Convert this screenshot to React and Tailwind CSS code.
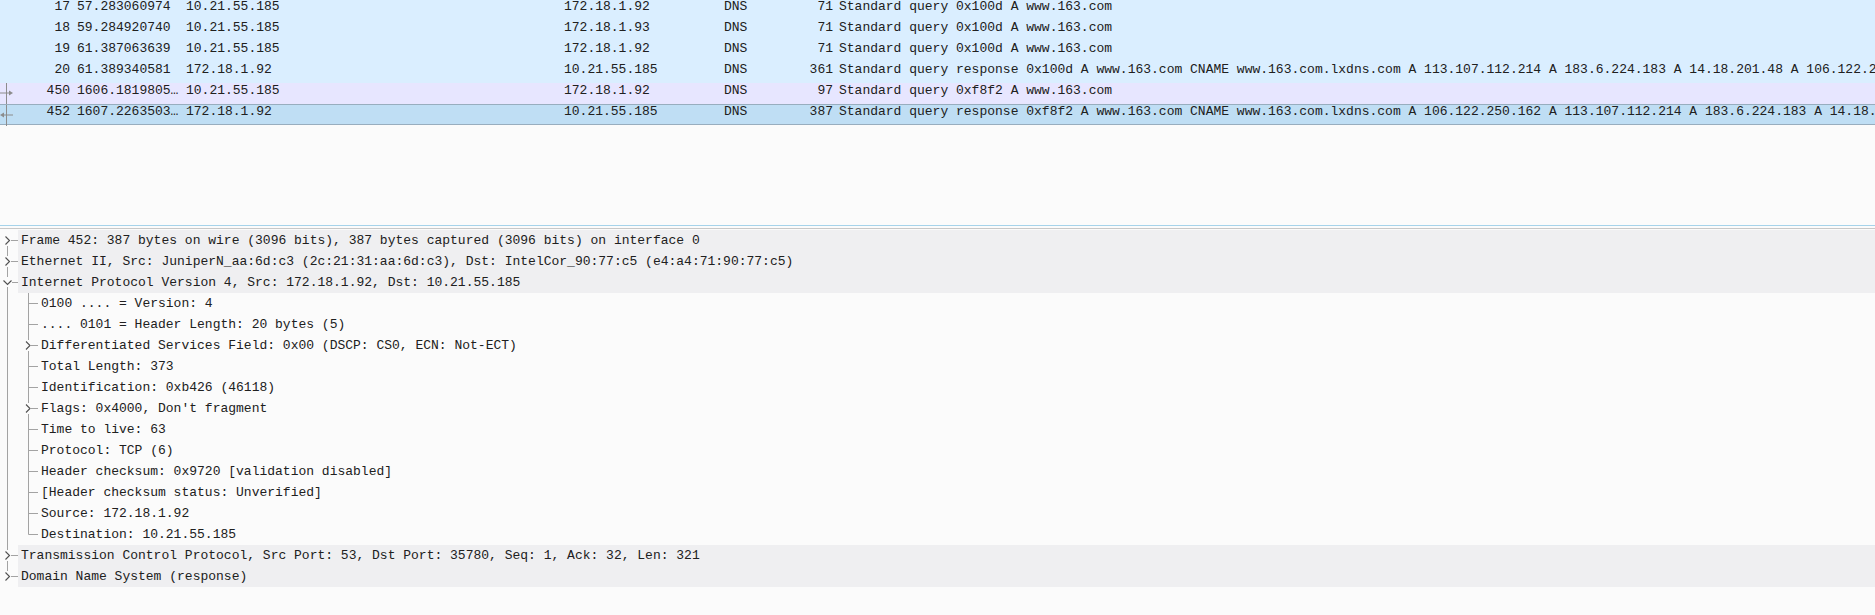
import React from "react";

const packets = [
  { no: 17, time: "57.283060974", src: "10.21.55.185", dst: "172.18.1.92", proto: "DNS", len: 71, info: "Standard query 0x100d A www.163.com", kind: "dns" },
  { no: 18, time: "59.284920740", src: "10.21.55.185", dst: "172.18.1.93", proto: "DNS", len: 71, info: "Standard query 0x100d A www.163.com", kind: "dns" },
  { no: 19, time: "61.387063639", src: "10.21.55.185", dst: "172.18.1.92", proto: "DNS", len: 71, info: "Standard query 0x100d A www.163.com", kind: "dns" },
  { no: 20, time: "61.389340581", src: "172.18.1.92", dst: "10.21.55.185", proto: "DNS", len: 361, info: "Standard query response 0x100d A www.163.com CNAME www.163.com.lxdns.com A 113.107.112.214 A 183.6.224.183 A 14.18.201.48 A 106.122.250.162", kind: "dns" },
  { no: 450, time: "1606.1819805…", src: "10.21.55.185", dst: "172.18.1.92", proto: "DNS", len: 97, info: "Standard query 0xf8f2 A www.163.com", kind: "tcp", mark: "req" },
  { no: 452, time: "1607.2263503…", src: "172.18.1.92", dst: "10.21.55.185", proto: "DNS", len: 387, info: "Standard query response 0xf8f2 A www.163.com CNAME www.163.com.lxdns.com A 106.122.250.162 A 113.107.112.214 A 183.6.224.183 A 14.18.201.48", kind: "sel", mark: "resp" },
];

function Mark({ type }) {
  if (!type) return null;
  return (
    <svg width="16" height="21" viewBox="0 0 16 21" className="block shrink-0">
      <line x1="6.5" y1="0" x2="6.5" y2="21" stroke="#8c8c8c" strokeWidth="1" />
      {type === "req" ? (
        <>
          <line x1="0" y1="10" x2="9" y2="10" stroke="#8c8c8c" strokeWidth="1" />
          <polygon points="9,7.5 13,10 9,12.5" fill="#8c8c8c" />
        </>
      ) : (
        <>
          <line x1="3" y1="10" x2="13" y2="10" stroke="#8c8c8c" strokeWidth="1" />
          <polygon points="4,7.5 0,10 4,12.5" fill="#8c8c8c" />
        </>
      )}
    </svg>
  );
}

function PacketRow({ p }) {
  const bg =
    p.kind === "dns"
      ? "bg-[#daeeff]"
      : p.kind === "tcp"
      ? "bg-[#e7e6ff]"
      : "bg-[#bfdef4] border-y border-[#98adbe]";
  return (
    <div className={`relative flex h-[21px] items-center whitespace-nowrap ${bg}`}>
      {p.mark && (
        <div className="absolute left-0 top-0 h-full">
          <Mark type={p.mark} />
        </div>
      )}
      <div className="flex h-full w-[74px] shrink-0 items-center justify-end pb-[6px] pr-[4px] leading-[15px]">
        <span>{p.no}</span>
      </div>
      <div className="flex h-full flex-1 items-center pb-[6px] leading-[15px]">
        <div className="w-[109px] shrink-0 pl-[3px]">{p.time}</div>
        <div className="w-[378px] shrink-0 pl-[3px]">{p.src}</div>
        <div className="w-[160px] shrink-0 pl-[3px]">{p.dst}</div>
        <div className="w-[55px] shrink-0 pl-[3px]">{p.proto}</div>
        <div className="w-[60px] shrink-0 pr-[3px] text-right">{p.len}</div>
        <div className="min-w-0 flex-1 overflow-hidden pl-[3px]">{p.info}</div>
      </div>
    </div>
  );
}

const LINE = "#a3a3a3";
const CHEV = "#505050";

function TopGutter({ state, first, last }) {
  return (
    <svg width="18" height="21" viewBox="0 0 18 21" className="shrink-0">
      {!first && <line x1="7.5" y1="0" x2="7.5" y2="5" stroke={LINE} />}
      {state === "open" ? (
        <>
          <polyline points="3.5,8.5 7.5,12.5 11.5,8.5" fill="none" stroke={CHEV} strokeWidth="1.1" />
          <line x1="7.5" y1="15" x2="7.5" y2="21" stroke={LINE} />
          <line x1="12" y1="10.5" x2="18" y2="10.5" stroke={LINE} />
        </>
      ) : (
        <>
          <polyline points="5.5,6.5 9.5,10.5 5.5,14.5" fill="none" stroke={CHEV} strokeWidth="1.1" />
          <line x1="11" y1="10.5" x2="18" y2="10.5" stroke={LINE} />
          {!last && <line x1="7.5" y1="16" x2="7.5" y2="21" stroke={LINE} />}
        </>
      )}
    </svg>
  );
}

function ChildGutter({ expandable, last }) {
  return (
    <svg width="38" height="21" viewBox="0 0 38 21" className="shrink-0">
      <line x1="7.5" y1="0" x2="7.5" y2="21" stroke={LINE} />
      {expandable ? (
        <>
          <line x1="28.5" y1="0" x2="28.5" y2="5" stroke={LINE} />
          <polyline points="26,6.5 30,10.5 26,14.5" fill="none" stroke={CHEV} strokeWidth="1.1" />
          <line x1="28.5" y1="16" x2="28.5" y2="21" stroke={LINE} />
          <line x1="31" y1="10.5" x2="38" y2="10.5" stroke={LINE} />
        </>
      ) : (
        <>
          <line x1="28.5" y1="0" x2="28.5" y2={last ? 10.5 : 21} stroke={LINE} />
          <line x1="28.5" y1="10.5" x2="38" y2="10.5" stroke={LINE} />
        </>
      )}
    </svg>
  );
}

const children = [
  { t: "0100 .... = Version: 4" },
  { t: ".... 0101 = Header Length: 20 bytes (5)" },
  { t: "Differentiated Services Field: 0x00 (DSCP: CS0, ECN: Not-ECT)", exp: true },
  { t: "Total Length: 373" },
  { t: "Identification: 0xb426 (46118)" },
  { t: "Flags: 0x4000, Don't fragment", exp: true },
  { t: "Time to live: 63" },
  { t: "Protocol: TCP (6)" },
  { t: "Header checksum: 0x9720 [validation disabled]" },
  { t: "[Header checksum status: Unverified]" },
  { t: "Source: 172.18.1.92" },
  { t: "Destination: 10.21.55.185", last: true },
];

function TopRow({ text, state, first, last }) {
  return (
    <div className="flex h-[21px] items-center whitespace-nowrap">
      <TopGutter state={state} first={first} last={last} />
      <div className="flex h-full flex-1 items-center bg-[#efeff1] pl-[3px]">{text}</div>
    </div>
  );
}

export default function App() {
  return (
    <div
      className="flex h-[615px] w-[1875px] flex-col overflow-hidden bg-[#fbfbfb] text-[13px] leading-[21px] text-[#202020]"
      style={{ fontFamily: '"Liberation Mono", "DejaVu Sans Mono", monospace' }}
    >
      <div className="-mt-px flex h-[227px] shrink-0 flex-col border-b border-[#a6d3ea]">
        {packets.map((p) => (
          <PacketRow key={p.no} p={p} />
        ))}
      </div>
      <div className="mt-[2px] flex flex-1 flex-col border-t border-[#c8c8c8] pt-px">
        <TopRow text="Frame 452: 387 bytes on wire (3096 bits), 387 bytes captured (3096 bits) on interface 0" first />
        <TopRow text="Ethernet II, Src: JuniperN_aa:6d:c3 (2c:21:31:aa:6d:c3), Dst: IntelCor_90:77:c5 (e4:a4:71:90:77:c5)" />
        <TopRow text="Internet Protocol Version 4, Src: 172.18.1.92, Dst: 10.21.55.185" state="open" />
        {children.map((c) => (
          <div key={c.t} className="flex h-[21px] items-center whitespace-nowrap">
            <ChildGutter expandable={c.exp} last={c.last} />
            <div className="pl-[3px]">{c.t}</div>
          </div>
        ))}
        <TopRow text="Transmission Control Protocol, Src Port: 53, Dst Port: 35780, Seq: 1, Ack: 32, Len: 321" />
        <TopRow text="Domain Name System (response)" last />
      </div>
    </div>
  );
}
